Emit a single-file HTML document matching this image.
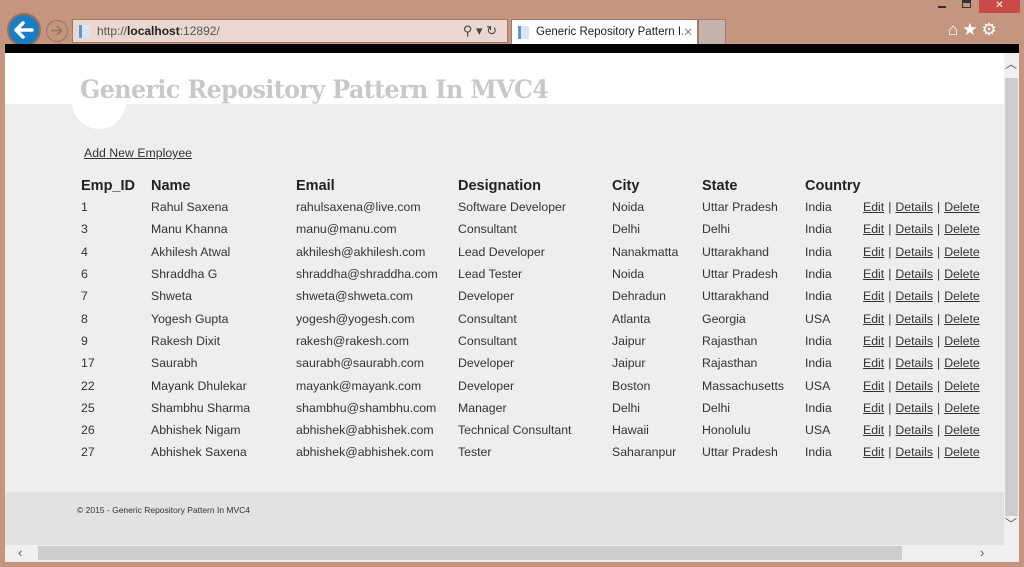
<!DOCTYPE html>
<html><head><style>
*{margin:0;padding:0;box-sizing:border-box}
body{width:1024px;height:567px;background:#c4967f;position:relative;overflow:hidden;font-family:"Liberation Sans",sans-serif}
.abs{position:absolute}
.back{left:7px;top:13px;width:34px;height:34px;border-radius:50%;background:#1a7dc4;border:2px solid #9a6e58}
.fwd{left:46px;top:20px;width:22px;height:22px;border-radius:50%;border:1.5px solid #9a7260;}
.addr{left:72px;top:19px;width:436px;height:24px;background:#ead8d0;border:1px solid #a07a66;font-size:12px;color:#555;padding:4px 0 0 24px}
.tab{left:511px;top:19px;width:187px;height:26px;background:#fff;border:1px solid #a07a66;font-size:11.5px;color:#222;padding:6px 0 0 24px;white-space:nowrap;overflow:hidden}
.tab2{left:698px;top:19px;width:28px;height:26px;background:#c4b3aa;border:1px solid #a07a66}
.black{left:5px;top:44px;width:1014px;height:9px;background:#000}
.white{left:5px;top:53px;width:999px;height:52px;background:#fff}
.grey{left:5px;top:104px;width:999px;height:389px;background:#eee}
.circle{left:72px;top:75px;width:54px;height:54px;border-radius:50%;background:#fff}
.title{left:80px;top:75px;font-family:"DejaVu Serif","Liberation Serif",serif;font-size:25px;color:#c8c8c8;white-space:nowrap;letter-spacing:-0.6px;font-weight:bold;transform:scaleX(0.95);transform-origin:left}
.foot{left:5px;top:492px;width:999px;height:53px;background:#e2e2e2;font-size:8.5px;color:#333;padding:13px 0 0 72px}
.vs{left:1004px;top:53px;width:15px;height:492px;background:#f0f0f0}
.vthumb{left:1005px;top:78px;width:13px;height:438px;background:#cdcdcd}
.hs{left:5px;top:545px;width:1014px;height:17px;background:#f0f0f0}
.hthumb{left:38px;top:546px;width:864px;height:14px;background:#cdcdcd}
table{position:absolute;left:81px;top:177px;border-collapse:collapse;font-size:12.3px;color:#333}
td,th{padding:0;height:22.3px;text-align:left;white-space:nowrap;vertical-align:middle}
td{padding-top:2px}
th{font-size:14.5px;font-weight:bold;color:#222;height:18px}
a{color:#333;text-decoration:underline}
.p{padding:0 4px}
</style></head><body>
<div class="abs back"><svg width="30" height="30" viewBox="0 0 30 30"><path d="M23 15H8M14 8l-7 7 7 7" stroke="#fff" stroke-width="3.5" fill="none" stroke-linecap="round" stroke-linejoin="round"/></svg></div>
<div class="abs fwd"><svg width="19" height="19" viewBox="0 0 19 19"><path d="M4 9.5h10M10 5l4.5 4.5L10 14" stroke="#9a7260" stroke-width="1.5" fill="none"/></svg></div>
<div class="abs addr"><span class="abs" style="left:6px;top:5px;width:11px;height:13px;background:#dde6ee;border-left:3px solid #5a9ad6"></span>http://<b style="color:#222">localhost</b>:12892/<span class="abs" style="right:10px;top:3px;color:#444;font-size:13px">⚲ ▾ ↻</span></div>
<div class="abs tab"><span class="abs" style="left:6px;top:6px;width:11px;height:13px;background:#dde6ee;border-left:3px solid #5a9ad6"></span>Generic Repository Pattern I...<span class="abs" style="right:4px;top:5px;color:#888;background:#fff">✕</span></div>
<div class="abs tab2"></div>
<div class="abs" style="left:979px;top:0;width:41px;height:13px;background:#c94a47;color:#fff;font-size:10px;text-align:center">✕</div>
<div class="abs" style="left:938px;top:6px;width:8px;height:2px;background:#333"></div>
<div class="abs" style="left:962px;top:0;width:9px;height:8px;border:1.5px solid #333;border-top-width:3px"></div>
<div class="abs" style="left:948px;top:20px;color:#fff;font-size:17px;letter-spacing:4px">⌂★⚙</div>
<div class="abs black"></div>
<div class="abs white"></div>
<div class="abs grey"></div>
<div class="abs circle"></div>
<div class="abs title">Generic Repository Pattern In MVC4</div>
<div class="abs" style="left:84px;top:146px;font-size:12.3px;color:#333;text-decoration:underline">Add New Employee</div>
<table>
<tr><th style="width:70px">Emp_ID</th><th style="width:145px">Name</th><th style="width:162px">Email</th><th style="width:154px">Designation</th><th style="width:90px">City</th><th style="width:103px">State</th><th style="width:58px">Country</th><th></th></tr>
<tr><td>1</td><td>Rahul Saxena</td><td>rahulsaxena@live.com</td><td>Software Developer</td><td>Noida</td><td>Uttar Pradesh</td><td>India</td><td><a>Edit</a><span class="p">|</span><a>Details</a><span class="p">|</span><a>Delete</a></td></tr>
<tr><td>3</td><td>Manu Khanna</td><td>manu@manu.com</td><td>Consultant</td><td>Delhi</td><td>Delhi</td><td>India</td><td><a>Edit</a><span class="p">|</span><a>Details</a><span class="p">|</span><a>Delete</a></td></tr>
<tr><td>4</td><td>Akhilesh Atwal</td><td>akhilesh@akhilesh.com</td><td>Lead Developer</td><td>Nanakmatta</td><td>Uttarakhand</td><td>India</td><td><a>Edit</a><span class="p">|</span><a>Details</a><span class="p">|</span><a>Delete</a></td></tr>
<tr><td>6</td><td>Shraddha G</td><td>shraddha@shraddha.com</td><td>Lead Tester</td><td>Noida</td><td>Uttar Pradesh</td><td>India</td><td><a>Edit</a><span class="p">|</span><a>Details</a><span class="p">|</span><a>Delete</a></td></tr>
<tr><td>7</td><td>Shweta</td><td>shweta@shweta.com</td><td>Developer</td><td>Dehradun</td><td>Uttarakhand</td><td>India</td><td><a>Edit</a><span class="p">|</span><a>Details</a><span class="p">|</span><a>Delete</a></td></tr>
<tr><td>8</td><td>Yogesh Gupta</td><td>yogesh@yogesh.com</td><td>Consultant</td><td>Atlanta</td><td>Georgia</td><td>USA</td><td><a>Edit</a><span class="p">|</span><a>Details</a><span class="p">|</span><a>Delete</a></td></tr>
<tr><td>9</td><td>Rakesh Dixit</td><td>rakesh@rakesh.com</td><td>Consultant</td><td>Jaipur</td><td>Rajasthan</td><td>India</td><td><a>Edit</a><span class="p">|</span><a>Details</a><span class="p">|</span><a>Delete</a></td></tr>
<tr><td>17</td><td>Saurabh</td><td>saurabh@saurabh.com</td><td>Developer</td><td>Jaipur</td><td>Rajasthan</td><td>India</td><td><a>Edit</a><span class="p">|</span><a>Details</a><span class="p">|</span><a>Delete</a></td></tr>
<tr><td>22</td><td>Mayank Dhulekar</td><td>mayank@mayank.com</td><td>Developer</td><td>Boston</td><td>Massachusetts</td><td>USA</td><td><a>Edit</a><span class="p">|</span><a>Details</a><span class="p">|</span><a>Delete</a></td></tr>
<tr><td>25</td><td>Shambhu Sharma</td><td>shambhu@shambhu.com</td><td>Manager</td><td>Delhi</td><td>Delhi</td><td>India</td><td><a>Edit</a><span class="p">|</span><a>Details</a><span class="p">|</span><a>Delete</a></td></tr>
<tr><td>26</td><td>Abhishek Nigam</td><td>abhishek@abhishek.com</td><td>Technical Consultant</td><td>Hawaii</td><td>Honolulu</td><td>USA</td><td><a>Edit</a><span class="p">|</span><a>Details</a><span class="p">|</span><a>Delete</a></td></tr>
<tr><td>27</td><td>Abhishek Saxena</td><td>abhishek@abhishek.com</td><td>Tester</td><td>Saharanpur</td><td>Uttar Pradesh</td><td>India</td><td><a>Edit</a><span class="p">|</span><a>Details</a><span class="p">|</span><a>Delete</a></td></tr>
</table>
<div class="abs foot">© 2015 - Generic Repository Pattern In MVC4</div>
<div class="abs vs"></div>
<div class="abs vthumb"></div>
<div class="abs" style="left:1005px;top:55px;font-size:12px;color:#555">︿</div>
<div class="abs" style="left:1005px;top:515px;font-size:12px;color:#555">﹀</div>
<div class="abs hs"></div>
<div class="abs hthumb"></div>
<div class="abs" style="left:18px;top:545px;font-size:13px;color:#555">‹</div>
<div class="abs" style="left:980px;top:545px;font-size:13px;color:#555">›</div>
</body></html>
